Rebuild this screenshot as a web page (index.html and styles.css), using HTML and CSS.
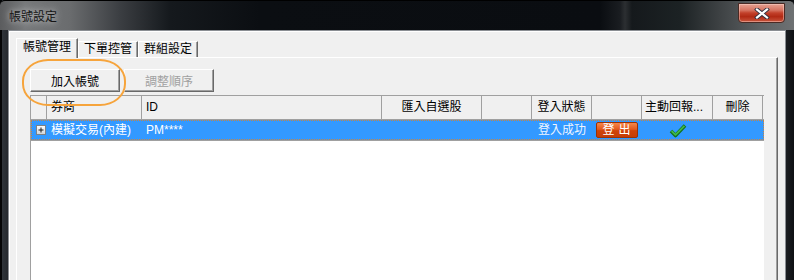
FILE: index.html
```html
<!DOCTYPE html>
<html lang="zh-Hant">

<head>
    <meta charset="UTF-8">
    <meta name="viewport" content="width=device-width, initial-scale=1.0">
    <title>帳號設定</title>
    <link rel="stylesheet" href="styles.css">
</head>

<body>
    <div class="window">
        <div class="titlebar">
            <span class="title">帳號設定</span>
            <button class="close-btn" title="關閉">
                <svg width="16" height="11" viewBox="0 0 16 11">
                    <path d="M3 1.5 L13 9.5 M13 1.5 L3 9.5" stroke="#2c3140" stroke-width="4" stroke-linecap="square" fill="none" />
                    <path d="M3 1.5 L13 9.5 M13 1.5 L3 9.5" stroke="#ffffff" stroke-width="2.2" stroke-linecap="square" fill="none" />
                </svg>
            </button>
        </div>

        <div class="frame">
            <div class="client">
                <div class="tabs">
                    <div class="tab active">帳號管理</div>
                    <div class="tab">下單控管</div>
                    <div class="tab">群組設定</div>
                </div>

                <div class="tab-panel">
                    <div class="toolbar">
                        <button class="btn">加入帳號</button>
                        <button class="btn" disabled>調整順序</button>
                        <div class="highlight"></div>
                    </div>

                    <div class="grid">
                        <div class="grid-head">
                            <div class="cell"></div>
                            <div class="cell left">券商</div>
                            <div class="cell left">ID</div>
                            <div class="cell">匯入自選股</div>
                            <div class="cell"></div>
                            <div class="cell">登入狀態</div>
                            <div class="cell"></div>
                            <div class="cell left narrow">主動回報...</div>
                            <div class="cell">刪除</div>
                        </div>

                        <div class="grid-row selected">
                            <div class="cell">
                                <svg class="expander" width="10" height="10" viewBox="0 0 10 10">
                                    <defs>
                                        <linearGradient id="exp" x1="0" y1="0" x2="0" y2="1">
                                            <stop offset="0" stop-color="#ffffff" />
                                            <stop offset="1" stop-color="#cfd3d8" />
                                        </linearGradient>
                                    </defs>
                                    <rect x="0.5" y="0.5" width="9" height="9" fill="url(#exp)" stroke="#7d8186" />
                                    <path d="M2.5 5 H7.5 M5 2.5 V7.5" stroke="#1c1c1c" stroke-width="1" />
                                </svg>
                            </div>
                            <div class="cell left">模擬交易(內建)</div>
                            <div class="cell left">PM****</div>
                            <div class="cell"></div>
                            <div class="cell"></div>
                            <div class="cell status">登入成功</div>
                            <div class="cell"><button class="logout-btn">登出</button></div>
                            <div class="cell">
                                <svg width="18" height="15" viewBox="0 0 18 15">
                                    <path d="M2 8 L6.5 12.5 L16 2.5" stroke="#13701c" stroke-width="3.6" fill="none" stroke-linejoin="round" />
                                    <path d="M2.6 8 L6.5 11.8 L15.4 2.8" stroke="#3fb84a" stroke-width="1.8" fill="none" stroke-linejoin="round" />
                                </svg>
                            </div>
                            <div class="cell"></div>
                        </div>

                        <div class="grid-body"></div>
                    </div>
                </div>
            </div>
        </div>
    </div>
</body>

</html>
```

FILE: styles.css
```css
* {
    box-sizing: border-box;
}

body {
    margin: 0;
    background-color: #0b0e12;
    font-family: 'Liberation Sans', 'Noto Sans CJK TC', sans-serif;
    font-size: 12px;
    color: #000000;
}

.window {
    width: 794px;
    height: 280px;
    overflow: hidden;
    display: flex;
    flex-direction: column;
    background: linear-gradient(90deg, #050607 0, #050607 2px, #2f3439 2px, #23272b 8px, #0b0e12 8px);
}

/* title bar */
.titlebar {
    height: 30px;
    flex-shrink: 0;
    display: flex;
    justify-content: space-between;
    align-items: flex-start;
    padding: 0 9px 0 9px;
    border-top: 1px solid #000000;
    background: linear-gradient(90deg, #5b5c5e 0, #77797b 25px, #6a6c6e 70px, #3b3e42 120px, #15191d 170px, #0b0e12 260px, #0a0d11 600px, #1a1d21 620px, #2c2f32 625px, #15191c 632px, #1c2224 680px, #3e4244 720px, #5d6163 760px, #6e7173 794px);
    border-radius: 5px 5px 0 0;
}

.title {
    margin-top: 9px;
    font-size: 12px;
    line-height: 14px;
    color: #151515;
    text-shadow: 0 0 6px rgba(255, 255, 255, 0.55), 0 0 10px rgba(255, 255, 255, 0.35);
}

.close-btn {
    margin-top: 2px;
    width: 47px;
    height: 20px;
    padding: 0;
    display: flex;
    align-items: center;
    justify-content: center;
    border: 1px solid #4a2a24;
    border-radius: 0 0 4px 4px;
    background: linear-gradient(#e6a394 0, #d5725f 35%, #c2402a 50%, #b12a14 70%, #c8553d 100%);
    box-shadow: inset 0 0 0 1px rgba(255, 220, 210, 0.45);
    cursor: pointer;
}

/* window body */
.frame {
    flex: 1;
    display: flex;
    padding: 0 8px 0 8px;
    background: linear-gradient(90deg, #050607 0, #050607 2px, #30353b 2px, #262a2f 8px, transparent 8px, transparent 786px, #1b1e22 786px, #0e1013 794px);
}

.client {
    flex: 1;
    background-color: #f0f0f0;
    border: 1px solid #8a8e93;
    border-bottom: none;
    padding: 7px 7px 0 7px;
    box-shadow: inset 1px 1px 0 #ffffff;
}

/* tabs */
.tabs {
    display: flex;
    align-items: flex-end;
    height: 19px;
    position: relative;
    z-index: 2;
}

.tab {
    height: 16px;
    line-height: 15px;
    padding: 0 5px;
    border-top: 1px solid #ffffff;
    border-left: 1px solid #ffffff;
    border-right: 1px solid #696969;
    box-shadow: inset -1px 0 0 #a0a0a0;
    background-color: #f0f0f0;
    white-space: nowrap;
}

.tab.active {
    height: 20px;
    line-height: 17px;
    padding: 0 6px;
    margin-bottom: -1px;
}

.tab-panel {
    height: 260px;
    display: flex;
    flex-direction: column;
    border-top: 1px solid #ffffff;
    border-left: 1px solid #ffffff;
    border-right: 1px solid #696969;
    box-shadow: inset -1px 0 0 #a0a0a0;
    padding: 11px 13px 0 13px;
}

/* toolbar */
.toolbar {
    position: relative;
    display: flex;
    gap: 4px;
    height: 23px;
    margin-bottom: 3px;
}

.btn {
    width: 90px;
    height: 23px;
    padding: 0;
    font-family: inherit;
    font-size: 12px;
    color: #000000;
    background-color: #f0f0f0;
    border: 1px solid;
    border-color: #ffffff #696969 #696969 #ffffff;
    box-shadow: inset -1px -1px 0 #a0a0a0;
    cursor: pointer;
}

.btn:disabled {
    color: #a0a0a0;
    cursor: default;
}

.highlight {
    position: absolute;
    left: -8px;
    top: -10px;
    width: 104px;
    height: 47px;
    border: 2px solid #f6a43c;
    border-radius: 26px / 22px;
    pointer-events: none;
}

/* grid */
.grid {
    flex: 1;
    display: flex;
    flex-direction: column;
    border-left: 1px solid #a0a0a0;
}

.grid-head,
.grid-row {
    display: grid;
    grid-template-columns: 16px 95px 240px 100px 50px 60px 50px 71px 50px;
}

.grid-head {
    height: 25px;
    border-top: 1px solid #a0a0a0;
    border-bottom: 1px solid #a0a0a0;
    background-color: #f0f0f0;
}

.grid-head .cell {
    border-right: 1px solid #a0a0a0;
    line-height: 23px;
}

.cell {
    display: flex;
    align-items: center;
    justify-content: center;
    white-space: nowrap;
    overflow: hidden;
}

.cell.left {
    justify-content: flex-start;
    padding-left: 4px;
}

.cell.narrow {
    padding-left: 3px;
}

.grid-row {
    height: 20px;
    line-height: 18px;
}

.grid-row.selected {
    background-color: #3399ff;
    color: #ffffff;
    outline: 1px dotted #c78442;
    outline-offset: -1px;
}

.grid-row .status {
    color: #eef5ff;
}

.expander {
    margin-left: 3px;
}

.logout-btn {
    width: 42px;
    height: 16px;
    padding: 0 0 0 3px;
    font-family: inherit;
    font-size: 12px;
    line-height: 14px;
    letter-spacing: 4px;
    color: #ffffff;
    border: 1px solid #9a3206;
    border-radius: 2px;
    background: linear-gradient(#f4874a 0, #e3591c 45%, #cf4308 55%, #c63d06 100%);
    cursor: pointer;
}

.grid-body {
    flex: 1;
    background-color: #ffffff;
    border-top: 1px solid #a0a0a0;
}
```
